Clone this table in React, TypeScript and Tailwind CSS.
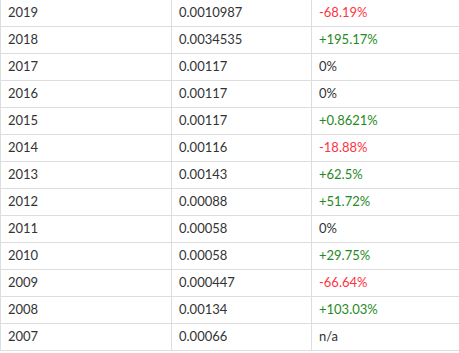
const rows: { year: string; price: string; change: string }[] = [
    {year: "2019", price: "0.0010987", change: "-68.19%"},
    {year: "2018", price: "0.0034535", change: "+195.17%"},
    {year: "2017", price: "0.00117", change: "0%"},
    {year: "2016", price: "0.00117", change: "0%"},
    {year: "2015", price: "0.00117", change: "+0.8621%"},
    {year: "2014", price: "0.00116", change: "-18.88%"},
    {year: "2013", price: "0.00143", change: "+62.5%"},
    {year: "2012", price: "0.00088", change: "+51.72%"},
    {year: "2011", price: "0.00058", change: "0%"},
    {year: "2010", price: "0.00058", change: "+29.75%"},
    {year: "2009", price: "0.000447", change: "-66.64%"},
    {year: "2008", price: "0.00134", change: "+103.03%"},
    {year: "2007", price: "0.00066", change: "n/a"},
];

function changeColor(change: string) {
    if (change.startsWith("-")) return "text-[#ff3341]";
    if (change.startsWith("+")) return "text-[#1f8a24]";
    return "text-[#333333]";
}

export default function App() {
    const cellClassName = "h-[27px] border border-[#dddddd] px-[7px] py-0 text-left align-middle";

    return (
        <div className="h-[353px] w-[459px] overflow-hidden bg-white">
            <table className="-mt-px w-[460px] table-fixed border-collapse font-['Lato',sans-serif] text-[13px] text-[#333333]">
                <colgroup>
                    <col className="w-[171px]" />
                    <col className="w-[140px]" />
                    <col />
                </colgroup>
                <tbody>
                    {rows.map((row) => (
                        <tr key={row.year}>
                            <td className={cellClassName}>{row.year}</td>
                            <td className={cellClassName}>{row.price}</td>
                            <td className={`${cellClassName} ${changeColor(row.change)}`}>{row.change}</td>
                        </tr>
                    ))}
                </tbody>
            </table>
        </div>
    );
}
